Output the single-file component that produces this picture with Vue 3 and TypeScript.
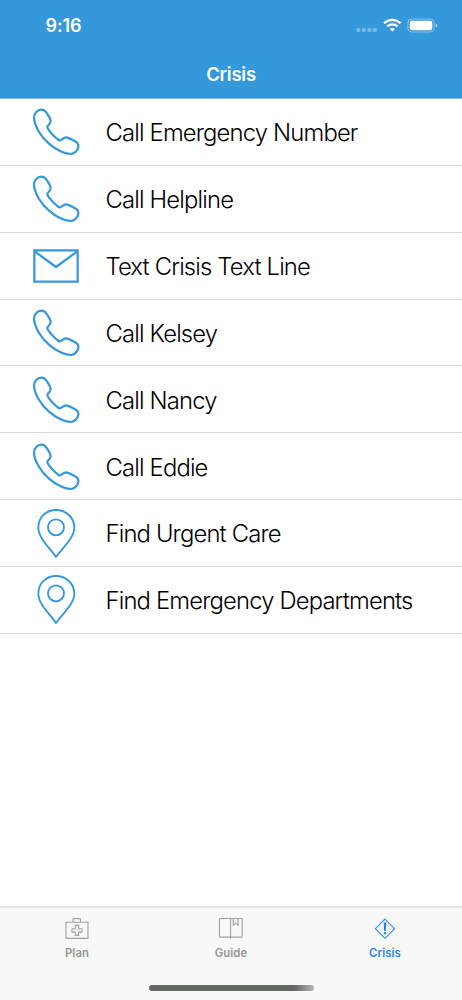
<script setup lang="ts">
type IconName = 'phone' | 'mail' | 'pin'

interface Action {
  icon: IconName
  label: string
}

const actions: Action[] = [
  { icon: 'phone', label: 'Call Emergency Number' },
  { icon: 'phone', label: 'Call Helpline' },
  { icon: 'mail', label: 'Text Crisis Text Line' },
  { icon: 'phone', label: 'Call Kelsey' },
  { icon: 'phone', label: 'Call Nancy' },
  { icon: 'phone', label: 'Call Eddie' },
  { icon: 'pin', label: 'Find Urgent Care' },
  { icon: 'pin', label: 'Find Emergency Departments' },
]
</script>

<template>
  <div class="screen">
    <header class="header">
      <div class="status">
        <span class="time">9:16</span>
        <svg class="indicators" width="84" height="18" viewBox="0 0 84 18">
          <g fill="#fff" opacity=".32">
            <rect x="2.2" y="11.900" width="4" height="4" rx="1.3" />
            <rect x="7.8" y="11.900" width="4" height="4" rx="1.3" />
            <rect x="13.4" y="11.900" width="4" height="4" rx="1.3" />
            <rect x="18.800" y="11.900" width="4" height="4" rx="1.3" />
          </g>
          <g transform="translate(1 1.4)">
            <g fill="none" stroke="#fff" stroke-width="2.3">
              <path d="M29.1 5.900C33.8 1.2 40.9 1.2 45.6 5.900" />
              <path d="M32.2 9C35.1 6.2 39.6 6.2 42.5 9" />
            </g>
            <path d="M34.8 11.5Q37.35 9.5 39.9 11.5L37.35 14.1Z" fill="#fff" />
          </g>
          <g transform="translate(.4 .4)">
            <rect x="53.5" y="2.6" width="26.2" height="13" rx="3.8" fill="none" stroke="#fff" stroke-opacity=".42" />
            <rect x="55.3" y="4.4" width="22.6" height="9.4" rx="2.1" fill="#fff" />
            <path d="M81.2 6.8Q83 7.6 83 9.1T81.2 11.4Z" fill="#fff" opacity=".5" />
          </g>
        </svg>
      </div>
      <h1 class="title">Crisis</h1>
    </header>

    <main class="list">
      <button v-for="action in actions" :key="action.label" class="row" type="button">
        <svg class="icon" width="48" height="48" viewBox="36 30 144 144">
          <path
            v-if="action.icon === 'phone'"
            d="M42 58C41 48 52 35 64 35C72 35 76 38 80 45C84 52 92 60 92 69C92 79 81 81 82 88C84 97 106 119 116 126C123 131 128 118 138 118C147 118 157 126 165 130C173 134 176 141 175 147C173 158 163 168 152 168C132 168 105 153 87 137C63 117 43 84 42 58Z"
          />
          <template v-else-if="action.icon === 'mail'">
            <path d="M43 55H173V149H43Z" stroke-linejoin="miter" />
            <path d="M44 58L108 105L172 58" />
          </template>
          <template v-else>
            <path class="thin" d="M108 171C91 146 55 114 55 83C55 52 78 30 108 30S163 52 163 83C163 114 125 146 108 171Z" />
            <circle class="thin" cx="108" cy="82" r="24" />
          </template>
        </svg>
        <span class="label">{{ action.label }}</span>
      </button>
    </main>

    <footer class="tabbar">
      <nav class="tabs">
        <a class="tab">
          <svg width="28" height="26" viewBox="0 0 28 26">
            <path d="M3 6.200H25V22.400H3ZM10 6V3.400Q10 2.600 10.800 2.600H16.700Q17.500 2.600 17.500 3.400V6" />
            <path d="M12.300 9.400H15.700V12.700H19V16.100H15.700V19.400H12.300V16.100H9V12.700H12.300Z" />
          </svg>
          <span>Plan</span>
        </a>
        <a class="tab">
          <svg width="28" height="26" viewBox="0 0 28 26">
            <path d="M3.200 2.500H24.400Q25.200 2.500 25.200 3.300V20.300Q25.200 21.100 24.400 21.100H3.200Q2.400 21.100 2.400 20.300V3.300Q2.400 2.500 3.200 2.500ZM13.600 2.500V22.700" />
            <path d="M16.300 2.500V9.300L18.700 7.200L21.100 9.300V2.500" />
          </svg>
          <span>Guide</span>
        </a>
        <a class="tab active">
          <svg width="28" height="26" viewBox="0 0 28 26">
            <path d="M14 3.100L23.600 12.700L14 22.300L4.400 12.700Z" />
            <path class="solid" d="M12.700 6.400H15.300L14.900 15H13.100Z" />
            <circle class="solid" cx="14" cy="17.300" r="1.200" />
          </svg>
          <span>Crisis</span>
        </a>
      </nav>
      <div class="home"></div>
    </footer>
  </div>
</template>

<style>
body {
  margin: 0;
  background: #fff;
}
</style>

<style scoped>
.screen {
  width: 462px;
  height: 1000px;
  display: flex;
  flex-direction: column;
  overflow: hidden;
  background: #fff;
  font-family: Inter, "Liberation Sans", sans-serif;
}
.header {
  height: 98px;
  flex: none;
  background: #3498db;
  color: #fff;
  border-bottom: 1px solid #86b7dc;
  box-sizing: content-box;
}
.status {
  height: 50px;
  display: flex;
  justify-content: space-between;
  padding: 0 24px 0 45.5px;
}
.time {
  font-size: 18px;
  line-height: 22px;
  margin-top: 15px;
  font-weight: 600;
  letter-spacing: -0.1px;
}
.indicators {
  margin-top: 16px;
}
.title {
  margin: 0;
  padding-top: 12px;
  font-size: 18.5px;
  line-height: 24px;
  font-weight: 600;
  letter-spacing: -0.25px;
  text-align: center;
}
.list {
  flex: 1;
}
.row {
  width: 100%;
  height: 66.86px;
  display: flex;
  align-items: center;
  gap: 25.5px;
  padding: 1px 0 0 32px;
  border: 0;
  border-bottom: 1px solid #dedee0;
  box-sizing: border-box;
  background: none;
  font: inherit;
  color: #000;
  text-align: left;
}
.icon {
  flex: none;
  overflow: visible;
  fill: none;
  stroke: #3498db;
  stroke-width: 6.6;
  stroke-linejoin: round;
}
.icon .thin {
  stroke-width: 5.6;
}
.label {
  font-size: 23.8px;
  line-height: 30px;
  padding-top: 1.8px;
  font-weight: 300;
  letter-spacing: -0.83px;
  white-space: nowrap;
}
.tabbar {
  height: 94px;
  flex: none;
  box-sizing: border-box;
  border-top: 2px solid #e5e5e5;
  background: #f8f8f8;
  display: flex;
  flex-direction: column;
  align-items: center;
}
.tabs {
  width: 100%;
  height: 77px;
  display: flex;
}
.tab {
  flex: 1;
  display: flex;
  flex-direction: column;
  align-items: center;
  padding-top: 8px;
  color: #969696;
  font-size: 11.3px;
  line-height: 14px;
  font-weight: 600;
  letter-spacing: 0.1px;
}
.tab svg {
  margin-bottom: 4px;
  fill: none;
  stroke: #a0a0a0;
  stroke-width: 1.1;
}
.tab.active {
  color: #1b87f5;
}
.tab.active svg {
  stroke: #2a8cf4;
}
.tab .solid {
  fill: #1b87f5;
  stroke: none;
}
.home {
  width: 165px;
  height: 6px;
  border-radius: 3px;
  background: linear-gradient(90deg, #646664 0%, #646664 88%, #b5b5b5 100%);
}
</style>
